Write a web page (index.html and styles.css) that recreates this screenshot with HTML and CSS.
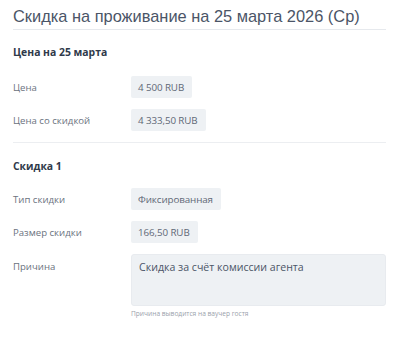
FILE: index.html
```html
<!DOCTYPE html>
<html lang="ru">
<head>
<meta charset="utf-8">
<link rel="stylesheet" href="styles.css">
</head>
<body>
<div class="page">
  <h1 class="title">Скидка на проживание на 25 марта 2026 (Ср)</h1>

  <section class="section">
    <h2 class="section-title">Цена на 25 марта</h2>
    <div class="rows">
      <div class="row"><span class="label">Цена</span><span class="pill">4 500 RUB</span></div>
      <div class="row"><span class="label">Цена со скидкой</span><span class="pill">4 333,50 RUB</span></div>
    </div>
  </section>

  <section class="section section-bordered">
    <h2 class="section-title">Скидка 1</h2>
    <div class="rows">
      <div class="row"><span class="label">Тип скидки</span><span class="pill">Фиксированная</span></div>
      <div class="row"><span class="label">Размер скидки</span><span class="pill">166,50 RUB</span></div>
      <div class="row row-top">
        <span class="label label-top">Причина</span>
        <div class="field">
          <div class="textarea">Скидка за счёт комиссии агента</div>
          <div class="hint">Причина выводится на ваучер гостя</div>
        </div>
      </div>
    </div>
  </section>
</div>
</body>
</html>
```

FILE: styles.css
```css
* { box-sizing: border-box; }
html, body { margin: 0; padding: 0; background: #fff; }
body { font-family: "Open Sans", "Noto Sans", sans-serif; }

.page {
  width: 403px;
  padding: 0 17px 0 13px;
}

.title {
  margin: 0;
  padding: 6px 0 3px;
  font-family: "Liberation Sans", Arial, sans-serif;
  font-weight: 400;
  font-size: 16.4px;
  line-height: 20px;
  color: #4b5567;
  border-bottom: 1px solid #e6e9ed;
}

.section { padding-top: 15px; padding-bottom: 11px; }
.section-bordered { border-top: 1px solid #eceef1; padding-top: 16px; }

.section-title {
  margin: 0 0 17px;
  font-size: 10.4px;
  line-height: 14px;
  font-weight: 700;
  color: #2f3a4a;
}
.section-bordered .section-title { margin-bottom: 15px; }

.rows { display: flex; flex-direction: column; gap: 11px; }

.row { display: flex; align-items: center; }
.row-top { align-items: flex-start; }

.label {
  width: 118px;
  flex: none;
  font-size: 9.6px;
  color: #6b7380;
}
.label-top { padding-top: 6px; line-height: 14px; }

.pill {
  height: 22px;
  display: inline-flex;
  align-items: center;
  padding: 0 8px 0 7px;
  background: #eef1f4;
  border-radius: 2px;
  font-size: 9.8px;
  letter-spacing: -0.1px;
  color: #5f6876;
}

.field { flex: 1; }
.textarea {
  height: 52px;
  padding: 5px 7px;
  background: #eef1f4;
  border: 1px solid #e8ebef;
  border-radius: 3px;
  font-size: 10.6px;
  line-height: 15px;
  color: #4b5567;
}
.hint {
  margin-top: 4px;
  font-size: 6.6px;
  line-height: 8px;
  color: #9aa1ab;
}
```
